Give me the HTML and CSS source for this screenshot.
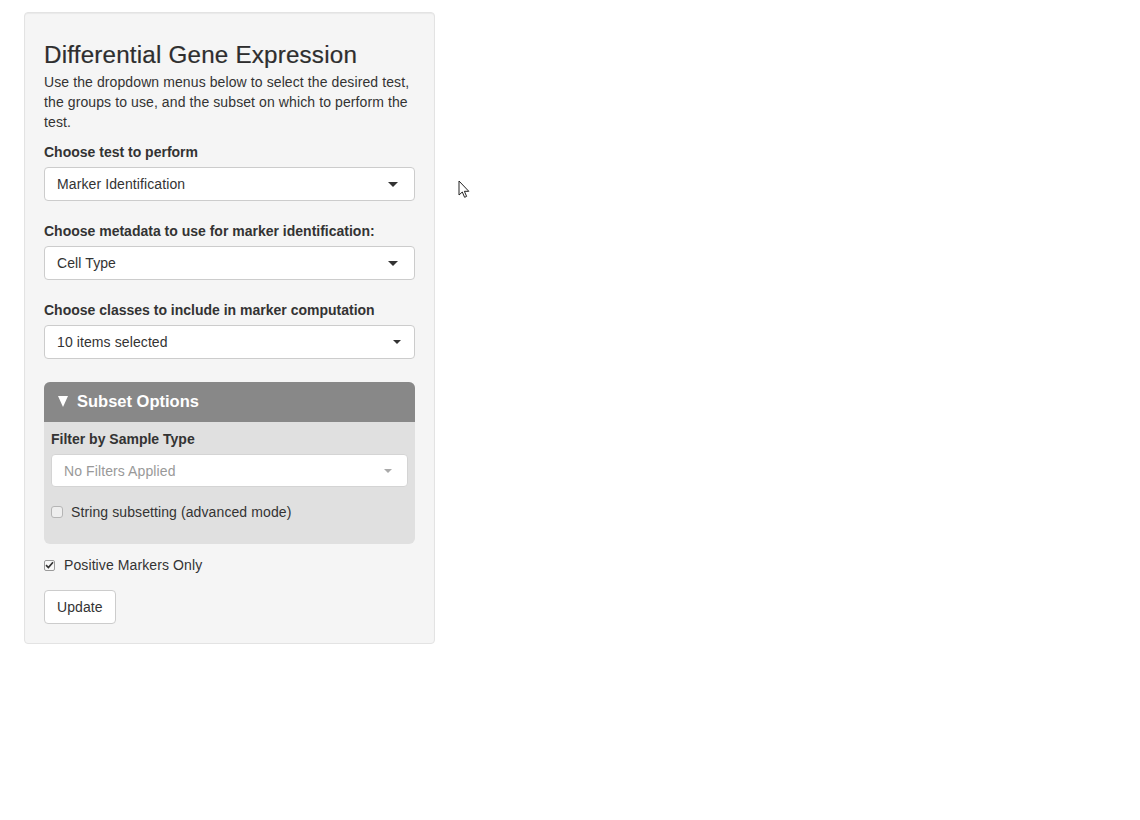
FILE: index.html
```html
<!DOCTYPE html>
<html>
<head>
<meta charset="utf-8">
<title>Differential Gene Expression</title>
<link rel="stylesheet" href="styles.css">
</head>
<body>
<div class="page">
  <div class="well">
    <h3 class="title">Differential Gene Expression</h3>
    <p class="desc">Use the dropdown menus below to select the desired test, the groups to use, and the subset on which to perform the test.</p>

    <div class="form-group">
      <label class="control-label">Choose test to perform</label>
      <div class="select">
        <span class="select-text">Marker Identification</span>
        <span class="caret caret-lg"></span>
      </div>
    </div>

    <div class="form-group">
      <label class="control-label">Choose metadata to use for marker identification:</label>
      <div class="select">
        <span class="select-text">Cell Type</span>
        <span class="caret caret-lg"></span>
      </div>
    </div>

    <div class="form-group">
      <label class="control-label">Choose classes to include in marker computation</label>
      <div class="select">
        <span class="select-text">10 items selected</span>
        <span class="caret caret-sm"></span>
      </div>
    </div>

    <div class="collapse-box">
      <div class="collapse-head"><span class="tri"></span>Subset Options</div>
      <div class="collapse-body">
        <div class="form-group inner">
          <label class="control-label">Filter by Sample Type</label>
          <div class="select select-inner">
            <span class="select-text placeholder">No Filters Applied</span>
            <span class="caret caret-sm caret-light"></span>
          </div>
        </div>
        <div class="check-row">
          <span class="cb"></span>
          <span class="cb-label">String subsetting (advanced mode)</span>
        </div>
      </div>
    </div>

    <div class="check-row outer">
      <span class="cb checked">
        <svg width="9" height="8" viewBox="0 0 9 8"><path d="M1 4.2 L3.4 6.6 L8 1.2" fill="none" stroke="#333" stroke-width="1.7"/></svg>
      </span>
      <span class="cb-label">Positive Markers Only</span>
    </div>

    <button class="btn">Update</button>
  </div>

  <svg class="cursor" width="13" height="19" viewBox="0 0 13 19">
    <path d="M1 1 L1 15 L4.3 12 L6.6 17.3 L8.6 16.4 L6.4 11.3 L10.8 11.3 Z" fill="#fff" stroke="#222" stroke-width="1"/>
  </svg>
</div>
</body>
</html>
```

FILE: styles.css
```css
html, body {
  margin: 0;
  padding: 0;
  background: #fff;
}

body {
  font-family: "Liberation Sans", Arial, Helvetica, sans-serif;
  font-size: 14px;
  line-height: 20px;
  color: #333;
  letter-spacing: 0.1px;
}

.page {
  position: relative;
  width: 1140px;
  height: 820px;
  padding: 12px 0 0 24px;
  box-sizing: border-box;
}

.well {
  width: 411px;
  box-sizing: border-box;
  background: #f5f5f5;
  border: 1px solid #e3e3e3;
  border-radius: 4px;
  padding: 10px 19px 19px 19px;
  box-shadow: inset 0 1px 1px rgba(0,0,0,0.05);
}

.title {
  font-size: 24.2px;
  font-weight: 500;
  line-height: 26.4px;
  letter-spacing: 0.2px;
  margin: 19px 0 4px 0;
  color: #2e2e2e;
  -webkit-text-stroke: 0.2px #2e2e2e;
}

.desc {
  margin: 0 0 10px 0;
}

.form-group {
  margin-bottom: 20px;
}

.control-label {
  display: block;
  font-weight: bold;
  letter-spacing: 0;
  margin-bottom: 5px;
}

.select {
  display: flex;
  align-items: center;
  justify-content: space-between;
  height: 34px;
  box-sizing: border-box;
  background: #fff;
  border: 1px solid #ccc;
  border-radius: 4px;
  padding: 0 16px 0 12px;
}

.select-text {
  white-space: nowrap;
}

.placeholder {
  color: #999;
}

.caret {
  display: inline-block;
  width: 0;
  height: 0;
}

.caret-lg {
  border-left: 5px solid transparent;
  border-right: 5px solid transparent;
  border-top: 5px solid #333;
  margin-right: 0;
}

.caret-sm {
  border-left: 4px solid transparent;
  border-right: 4px solid transparent;
  border-top: 4px solid #333;
  margin-right: -3px;
}

.caret-light {
  border-top-color: #aaa;
  margin-right: -1px;
}

.collapse-box {
  margin-top: 23px;
  border-radius: 6px;
  overflow: hidden;
  background: #e0e0e0;
}

.collapse-head {
  display: flex;
  align-items: center;
  background: #888;
  color: #fff;
  font-weight: bold;
  font-size: 16.5px;
  letter-spacing: 0;
  height: 40px;
  padding-left: 14px;
  padding-bottom: 2px;
  box-sizing: border-box;
}

.tri {
  display: inline-block;
  width: 0;
  height: 0;
  border-left: 5.5px solid transparent;
  border-right: 5.5px solid transparent;
  border-top: 11px solid #fff;
  margin-right: 9px;
}

.collapse-body {
  padding: 7px 7px 22px 7px;
}

.form-group.inner {
  margin-bottom: 15px;
}

.select-inner {
  height: 33px;
  border-color: #d4d4d4;
}

.check-row {
  display: flex;
  align-items: center;
  height: 20px;
}

.collapse-body .check-row {
  margin-top: 3px;
}

.check-row.outer {
  margin-top: 11px;
  margin-bottom: 15px;
}

.cb {
  width: 11px;
  height: 11px;
  box-sizing: border-box;
  border: 1px solid #b5b5b5;
  border-radius: 2px;
  background: #f4f4f4;
  margin-right: 9px;
  display: flex;
  align-items: center;
  justify-content: center;
}

.cb.checked {
  background: #f8f8f8;
  border-color: #9a9a9a;
}

.collapse-body .cb {
  margin-left: 0;
  margin-right: 8px;
  width: 12px;
  height: 12px;
  border-radius: 3px;
  background: #eeeeee;
}

.btn {
  font-family: inherit;
  font-size: 14px;
  line-height: 20px;
  letter-spacing: 0.1px;
  color: #333;
  background: #fff;
  border: 1px solid #ccc;
  border-radius: 4px;
  padding: 6px 12px;
  cursor: pointer;
}

.cursor {
  position: absolute;
  left: 458px;
  top: 180px;
}
```
